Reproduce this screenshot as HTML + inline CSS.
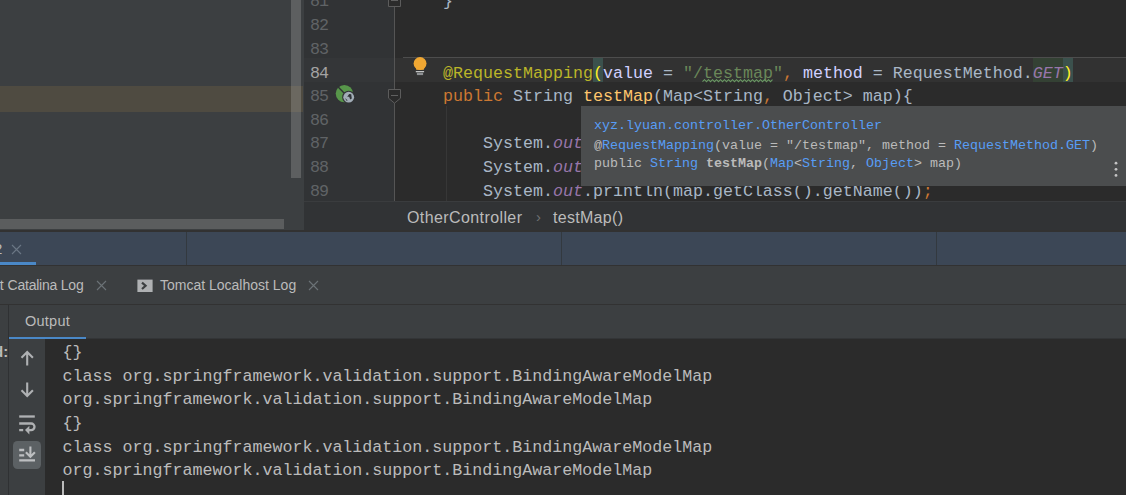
<!DOCTYPE html>
<html>
<head>
<meta charset="utf-8">
<title>IDE</title>
<style>
html,body{margin:0;padding:0;}
body{width:1126px;height:495px;overflow:hidden;position:relative;background:#3c3f41;font-family:"Liberation Sans",sans-serif;}
.abs{position:absolute;}
.mono{font-family:"Liberation Mono",monospace;white-space:pre;}
.code{font-size:16.667px;line-height:24px;height:24px;color:#a9b7c6;left:443px;}
.ln{font-size:16.667px;line-height:24px;height:24px;color:#606366;left:310px;letter-spacing:-0.9px;}
.con{font-size:16.667px;line-height:24px;height:24px;color:#bbbbbb;left:62.5px;}
.ui{font-size:15px;line-height:20px;height:20px;color:#bbbbbb;white-space:pre;}
.pop{font-size:13.333px;line-height:19px;height:19px;color:#bbbbbb;left:594px;}
.k{color:#cc7832;}
.a{color:#bbb529;}
.s{color:#6a8759;}
.f{color:#ffc66d;}
.c{color:#9876aa;font-style:italic;}
.at{color:#d0d0ff;}
.lk{color:#589df6;}
.br{color:#ffef28;}
</style>
</head>
<body>

<!-- left project panel -->
<div class="abs" style="left:0;top:0;width:304px;height:231px;background:#3c3f41;"></div>
<div class="abs" style="left:0;top:86px;width:303px;height:26px;background:#4f4b41;"></div>
<div class="abs" style="left:291px;top:0;width:10px;height:178px;background:#5d5f60;"></div>
<div class="abs" style="left:291px;top:86px;width:10px;height:26px;background:#6b6860;"></div>
<div class="abs" style="left:0;top:219px;width:284px;height:10px;background:#5b5d5e;"></div>

<!-- editor -->
<div class="abs" style="left:304px;top:0;width:822px;height:201px;background:#2b2b2b;"></div>
<div class="abs" style="left:304px;top:0;width:90px;height:201px;background:#313335;"></div>
<!-- caret row -->
<div class="abs" style="left:304px;top:58px;width:90px;height:24px;background:#343638;"></div>
<div class="abs" style="left:395px;top:58px;width:731px;height:24px;background:#323232;"></div>
<div class="abs" style="left:403px;top:57px;width:723px;height:1px;background:#4d4d4d;"></div>
<div class="abs" style="left:593px;top:58px;width:10px;height:24px;background:#3b514d;"></div>
<div class="abs" style="left:1033px;top:58px;width:30px;height:24px;background:#344134;"></div>
<div class="abs" style="left:1063px;top:58px;width:10px;height:24px;background:#3b514d;"></div>
<!-- fold line -->
<div class="abs" style="left:394px;top:0;width:1px;height:201px;background:#555555;"></div>
<!-- indent guide -->
<div class="abs" style="left:446px;top:106px;width:1px;height:95px;background:#373737;"></div>

<!-- line numbers -->
<div class="abs mono ln" style="top:-9.7px;">81</div>
<div class="abs mono ln" style="top:13.95px;">82</div>
<div class="abs mono ln" style="top:37.6px;">83</div>
<div class="abs mono ln" style="top:62px;color:#a4a3a3;">84</div>
<div class="abs mono ln" style="top:84.9px;">85</div>
<div class="abs mono ln" style="top:108.55px;">86</div>
<div class="abs mono ln" style="top:132.2px;">87</div>
<div class="abs mono ln" style="top:155.85px;">88</div>
<div class="abs mono ln" style="top:179.5px;">89</div>

<!-- code -->
<div class="abs mono code" style="top:-9.7px;">}</div>
<div class="abs mono code" style="top:62px;"><span class="a">@RequestMapping</span><span class="br">(</span><span class="at">value</span> = <span class="s">"/testmap"</span><span class="k">,</span> <span class="at">method</span> = RequestMethod.<span class="c">GET</span><span class="br">)</span></div>
<div class="abs mono code" style="top:84.9px;"><span class="k">public</span> String <span class="f">testMap</span>(Map&lt;String<span class="k">,</span> Object&gt; map){</div>
<div class="abs mono code" style="top:132.2px;">    System.<span class="c">out</span>.println(map);</div>
<div class="abs mono code" style="top:155.85px;">    System.<span class="c">out</span>.println(map.getClass());</div>
<div class="abs mono code" style="top:179.5px;">    System.<span class="c">out</span>.println(map.getClass().getName())<span class="k">;</span></div>

<svg class="abs" style="left:702px;top:78.7px;" width="72" height="4" viewBox="0 0 72 4"><path d="M0.5 2.7 L2.5 0.7 L4.5 2.7 L6.5 0.7 L8.5 2.7 L10.5 0.7 L12.5 2.7 L14.5 0.7 L16.5 2.7 L18.5 0.7 L20.5 2.7 L22.5 0.7 L24.5 2.7 L26.5 0.7 L28.5 2.7 L30.5 0.7 L32.5 2.7 L34.5 0.7 L36.5 2.7 L38.5 0.7 L40.5 2.7 L42.5 0.7 L44.5 2.7 L46.5 0.7 L48.5 2.7 L50.5 0.7 L52.5 2.7 L54.5 0.7 L56.5 2.7 L58.5 0.7 L60.5 2.7 L62.5 0.7 L64.5 2.7 L66.5 0.7 L68.5 2.7 L70.5 0.7" stroke="#6a9a64" stroke-width="1.05" fill="none"/></svg>
<!-- gutter icons -->
<svg class="abs" style="left:386px;top:-8px;" width="18" height="16" viewBox="0 0 18 16"><path d="M2.5 14.5 L2.5 5 L8.5 0 L14.5 5 L14.5 14.5 Z" fill="#2b2b2b" stroke="#5c5c5c" stroke-width="1"/><path d="M5 8.5 H12" stroke="#606060" stroke-width="1"/></svg>
<svg class="abs" style="left:386px;top:87px;" width="18" height="18" viewBox="0 0 18 18"><path d="M2.5 2.5 H14.5 V11.2 L8.5 16.2 L2.5 11.2 Z" fill="#2b2b2b" stroke="#5c5c5c" stroke-width="1"/><path d="M5 8.5 H12" stroke="#606060" stroke-width="1"/></svg>
<!-- bulb -->
<svg class="abs" style="left:411px;top:55px;" width="18" height="22" viewBox="0 0 18 22"><circle cx="9.05" cy="8.5" r="6.45" fill="#f0a732"/><path d="M4.6 11 L5.2 14.8 H12.9 L13.5 11 Z" fill="#f0a732"/><rect x="4.8" y="16" width="8.3" height="1.3" fill="#c4c5c6"/><rect x="5.9" y="17.8" width="6.2" height="2.3" fill="#8e9093"/></svg>
<!-- spring web icon -->
<svg class="abs" style="left:334px;top:83px;" width="22" height="22" viewBox="0 0 22 22"><circle cx="10.4" cy="10.6" r="8.7" fill="#57964a"/><path d="M3.2 3 L12 12" stroke="#313335" stroke-width="1.4"/><circle cx="14.7" cy="14.2" r="6.5" fill="#313335"/><circle cx="14.7" cy="14.2" r="5.4" fill="#a2adb7"/><path d="M13.2 13.8 l2 -2.8 2 0.2 0.6 4.2 -1.6 1.2 -1 -2.8z M10.8 15 l2 3 0.8 -0.8z" fill="#2f3337"/></svg>

<!-- popup -->
<div class="abs" style="left:581px;top:105.5px;width:545px;height:80.5px;background:#4b4d4e;"></div>
<div class="abs mono pop" style="top:116.4px;"><span class="lk">xyz.lyuan.controller.OtherController</span></div>
<div class="abs mono pop" style="top:135.5px;">@<span class="lk">RequestMapping</span>(value = "/testmap", method = <span class="lk">RequestMethod.GET</span>)</div>
<div class="abs mono pop" style="top:154.2px;">public <span class="lk">String</span> <b>testMap</b>(<span class="lk">Map</span>&lt;<span class="lk">String</span>, <span class="lk">Object</span>&gt; map)</div>
<svg class="abs" style="left:1112px;top:160px;" width="8" height="20" viewBox="0 0 8 20"><circle cx="4" cy="3.2" r="1.4" fill="#c4c4c4"/><circle cx="4" cy="9.3" r="1.4" fill="#c4c4c4"/><circle cx="4" cy="15.4" r="1.4" fill="#c4c4c4"/></svg>

<!-- breadcrumbs -->
<div class="abs" style="left:304px;top:201px;width:822px;height:30.5px;background:#313335;"></div>
<div class="abs" style="left:304px;top:201px;width:822px;height:1px;background:#3a3c3e;"></div>
<div class="abs ui" style="left:407px;top:208px;font-size:16px;letter-spacing:0.4px;">OtherController</div>
<div class="abs ui" style="left:536px;top:207px;color:#6f7173;">›</div>
<div class="abs ui" style="left:553px;top:208px;font-size:16px;letter-spacing:0.3px;">testMap()</div>

<!-- tool window header -->
<div class="abs" style="left:0;top:230px;width:1126px;height:2px;background:#323232;"></div>
<div class="abs" style="left:0;top:231.5px;width:1126px;height:33.5px;background:#3c4756;"></div>
<div class="abs" style="left:186px;top:232px;width:1px;height:33px;background:#33393f;"></div>
<div class="abs" style="left:561px;top:232px;width:1px;height:33px;background:#33393f;"></div>
<div class="abs" style="left:936px;top:232px;width:1px;height:33px;background:#33393f;"></div>
<div class="abs" style="left:0;top:262px;width:35.5px;height:3.5px;background:#4a88c7;"></div>
<div class="abs" style="left:0;top:265px;width:1126px;height:1px;background:#323232;"></div>
<div class="abs ui" style="left:-6px;top:238.5px;">2</div>
<svg class="abs" style="left:11.1px;top:244.1px;" width="11" height="11" viewBox="0 0 11 11"><path d="M1 1 L10 10 M10 1 L1 10" stroke="#6b7785" stroke-width="1.1" fill="none"/></svg>

<!-- tab row -->
<div class="abs ui" style="right:1042.5px;top:275px;font-size:14px;text-align:right;">Tomcat <span style="letter-spacing:-0.22px;">Catalina Log</span></div>
<svg class="abs" style="left:96.3px;top:279.7px;" width="11" height="11" viewBox="0 0 11 11"><path d="M1 1 L10 10 M10 1 L1 10" stroke="#6c7377" stroke-width="1.1" fill="none"/></svg>
<svg class="abs" style="left:137px;top:278.5px;" width="16" height="14" viewBox="0 0 16 14"><rect x="0.4" y="0.6" width="15.2" height="12.4" fill="#afb1b3"/><path d="M5 3.6 L8.6 6.8 L5 10" stroke="#3c3f41" stroke-width="2.2" fill="none"/></svg>
<div class="abs ui" style="left:160px;top:275px;font-size:14px;">Tomcat Localhost Log</div>
<svg class="abs" style="left:308.2px;top:279.9px;" width="11" height="11" viewBox="0 0 11 11"><path d="M1 1 L10 10 M10 1 L1 10" stroke="#6c7377" stroke-width="1.1" fill="none"/></svg>
<div class="abs" style="left:0;top:304px;width:1126px;height:1px;background:#323232;"></div>

<!-- output tab -->
<div class="abs" style="left:8px;top:305px;width:1px;height:190px;background:#2f3133;"></div>
<div class="abs ui" style="left:25px;top:311px;font-size:14.5px;letter-spacing:0.25px;">Output</div>
<div class="abs" style="left:9px;top:337px;width:77px;height:2px;background:#4a88c7;"></div>

<!-- console -->
<div class="abs" style="left:45px;top:339px;width:1081px;height:156px;background:#2b2b2b;"></div>
<div class="abs" style="left:86px;top:338px;width:1040px;height:1px;background:#333537;"></div>
<div class="abs ui" style="left:-6px;top:342px;font-weight:bold;">d:</div>

<div class="abs mono con" style="top:340.85px;">{}</div>
<div class="abs mono con" style="top:364.55px;">class org.springframework.validation.support.BindingAwareModelMap</div>
<div class="abs mono con" style="top:388.25px;">org.springframework.validation.support.BindingAwareModelMap</div>
<div class="abs mono con" style="top:411.95px;">{}</div>
<div class="abs mono con" style="top:435.65px;">class org.springframework.validation.support.BindingAwareModelMap</div>
<div class="abs mono con" style="top:459.35px;">org.springframework.validation.support.BindingAwareModelMap</div>
<div class="abs" style="left:62.2px;top:481px;width:1.7px;height:14px;background:#bbbbbb;"></div>

<!-- console toolbar -->
<svg class="abs" style="left:18px;top:348px;" width="20" height="20" viewBox="0 0 20 20"><path d="M9.2 17.4 V4.6 M3.5 9.8 L9.2 4.1 L14.9 9.8" stroke="#afb1b3" stroke-width="2.1" fill="none"/></svg>
<svg class="abs" style="left:18px;top:380px;" width="20" height="20" viewBox="0 0 20 20"><path d="M9.2 2.4 V15.4 M3.5 10.2 L9.2 15.9 L14.9 10.2" stroke="#afb1b3" stroke-width="2.1" fill="none"/></svg>
<svg class="abs" style="left:17px;top:413px;" width="22" height="22" viewBox="0 0 22 22"><path d="M2.2 3.5 H17.8" stroke="#afb1b3" stroke-width="2.3" fill="none"/><path d="M2.2 10.5 H14.2 a3.3 3.3 0 0 1 0 6.6 H11" stroke="#afb1b3" stroke-width="2.3" fill="none"/><path d="M12.4 12.8 L8 17.1 L12.4 21.4 Z" fill="#afb1b3"/><path d="M2.2 17.1 H6.2" stroke="#afb1b3" stroke-width="2.3"/></svg>
<div class="abs" style="left:12.5px;top:441px;width:28px;height:28px;border-radius:4.5px;background:#5c6164;"></div>
<svg class="abs" style="left:17px;top:445px;" width="22" height="20" viewBox="0 0 22 20"><path d="M2.2 5 H7.2 M2.2 10.4 H7.2 M2.2 15.4 H18" stroke="#bdbfc1" stroke-width="2.3" fill="none"/><path d="M13.4 1.6 V11.3 M8.9 7.2 L13.4 11.7 L17.9 7.2" stroke="#bdbfc1" stroke-width="2.1" fill="none"/></svg>

</body>
</html>
